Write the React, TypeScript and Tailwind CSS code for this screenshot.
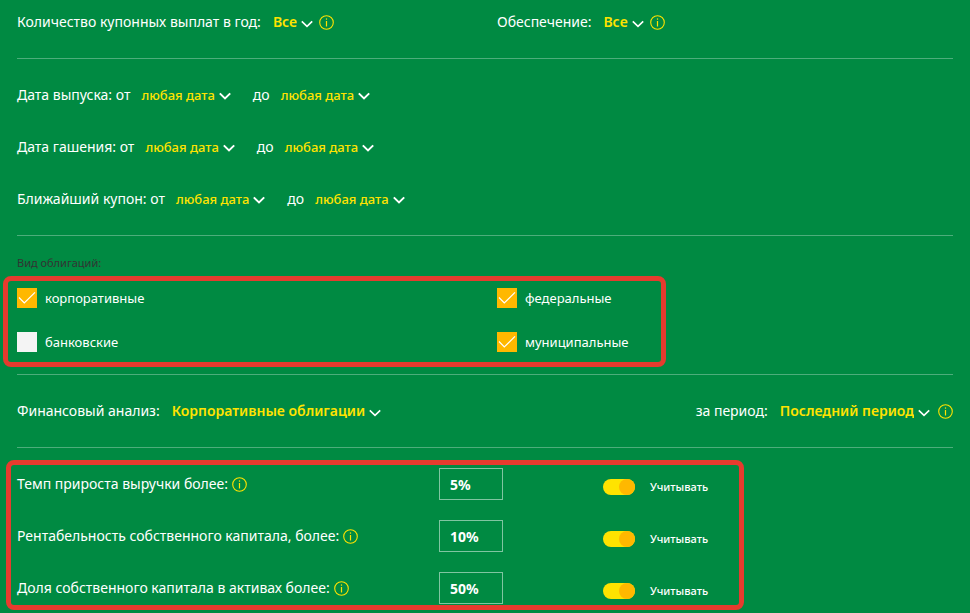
import { useState } from 'react';

const dateRows = ['Дата выпуска: от', 'Дата гашения: от', 'Ближайший купон: от'];

const bondTypes = [
  { id: 'corporate', label: 'корпоративные', checked: true },
  { id: 'federal', label: 'федеральные', checked: true },
  { id: 'bank', label: 'банковские', checked: false },
  { id: 'municipal', label: 'муниципальные', checked: true },
];

const ratios = [
  { id: 'growth', label: 'Темп прироста выручки более:', value: '5%' },
  { id: 'roe', label: 'Рентабельность собственного капитала, более:', value: '10%' },
  { id: 'equity', label: 'Доля собственного капитала в активах более:', value: '50%' },
];

function InfoButton() {
  return (
    <button type="button" aria-label="Подсказка" className="shrink-0 text-[#ffe300]">
      <svg width="15" height="15" viewBox="0 0 15 15" fill="none" stroke="currentColor">
        <circle cx="7.5" cy="7.5" r="6.8" strokeWidth="1.1" />
        <path d="M7.5 6v5.5" strokeWidth="1.2" />
        <path d="M7.5 3.4v1.3" strokeWidth="1.2" />
      </svg>
    </button>
  );
}

function Chevron({ bold = false }: { bold?: boolean }) {
  return (
    <svg
      width="12"
      height="8"
      viewBox="0 0 12 8"
      fill="none"
      stroke="white"
      strokeWidth={bold ? 2 : 1.6}
      className="pointer-events-none shrink-0"
    >
      <path d="M0.8 1.4L6 6.4L11.2 1.4" />
    </svg>
  );
}

function SelectField({ id, label, value }: { id: string; label: string; value: string }) {
  return (
    <div className="flex items-center">
      <label htmlFor={id} className="mr-3">{label}</label>
      <div className="flex items-center gap-1">
        <select
          id={id}
          className="field-sizing-content appearance-none bg-transparent text-[14px] leading-5 font-semibold text-[#ffe300] outline-none"
        >
          <option>{value}</option>
        </select>
        <span className="pt-1">
          <Chevron />
        </span>
      </div>
    </div>
  );
}

function DateButton() {
  return (
    <button type="button" className="flex items-center gap-1 text-[13px] font-medium text-[#ffe300]">
      любая дата
      <span className="pt-0.5">
        <Chevron bold />
      </span>
    </button>
  );
}

function BondCheckbox({ id, label, checked }: { id: string; label: string; checked: boolean }) {
  const [on, setOn] = useState(checked);

  return (
    <label htmlFor={id} className="flex items-center gap-2 text-[13px] leading-5">
      <span className="grid size-5">
        <input
          id={id}
          type="checkbox"
          checked={on}
          onChange={() => setOn(!on)}
          className="peer col-start-1 row-start-1 size-5 appearance-none bg-[#f4f4f4] checked:bg-[#ffb800]"
        />
        <svg
          viewBox="0 0 20 20"
          fill="none"
          stroke="white"
          strokeWidth="1.2"
          className="pointer-events-none invisible col-start-1 row-start-1 size-5 peer-checked:visible"
        >
          <path d="M2 9.5L7.3 15L18 4.3" />
        </svg>
      </span>
      {label}
    </label>
  );
}

function RatioRow({ id, label, value }: { id: string; label: string; value: string }) {
  const [text, setText] = useState(value);
  const [on, setOn] = useState(true);

  return (
    <div className="grid h-8 grid-cols-[422px_164px_1fr] items-center">
      <div className="flex items-center gap-1">
        <label htmlFor={id}>{label}</label>
        <InfoButton />
      </div>
      <input
        id={id}
        type="text"
        value={text}
        onChange={(e) => setText(e.target.value)}
        className="h-8 w-16 border border-white/50 bg-transparent px-2.5 text-[14px] font-bold outline-none"
      />
      <label className="flex items-center gap-[15px] pt-1.5 text-[11px] leading-4 font-medium">
        <input
          type="checkbox"
          role="switch"
          checked={on}
          onChange={() => setOn(!on)}
          className="flex h-4 w-8 appearance-none rounded-full bg-gray-300 before:size-4 before:rounded-full before:bg-white checked:justify-end checked:bg-[#ffe300] checked:before:bg-[#ffb800]"
        />
        Учитывать
      </label>
    </div>
  );
}

export default function App() {
  return (
    <main className="min-h-screen bg-[#008a42] px-[17px] font-['Noto_Sans','Open_Sans',sans-serif] text-[14px] leading-5 text-white">
      <section className="grid grid-cols-2 gap-6 border-b border-white/30 pt-3 pb-[26px]">
        <div className="flex items-center gap-1.5">
          <SelectField id="coupons" label="Количество купонных выплат в год:" value="Все" />
          <InfoButton />
        </div>
        <div className="flex items-center gap-1.5">
          <SelectField id="security" label="Обеспечение:" value="Все" />
          <InfoButton />
        </div>
      </section>

      <section className="border-b border-white/30 py-2.5">
        {dateRows.map((label) => (
          <div key={label} className="flex h-[52px] items-center">
            <span className="mr-[11px]">{label}</span>
            <DateButton />
            <span className="mr-[11px] ml-[22px]">до</span>
            <DateButton />
          </div>
        ))}
      </section>

      <fieldset className="relative border-b border-white/30 pb-[22px]">
        <legend className="pt-5 text-[11px] leading-3.5 text-[#333333]">Вид облигаций:</legend>
        <div className="grid grid-cols-2 gap-6 pt-[18px]">
          {bondTypes.map((type) => (
            <BondCheckbox key={type.id} {...type} />
          ))}
        </div>
        {/* Highlight frame */}
        <div className="pointer-events-none absolute top-1.5 right-[287px] bottom-[7px] -left-3.5 rounded-lg border-5 border-[#e63b2e]"></div>
      </fieldset>

      <section className="flex h-[73px] items-center justify-between border-b border-white/30">
        <SelectField id="analysis" label="Финансовый анализ:" value="Корпоративные облигации" />
        <div className="flex items-center gap-2">
          <SelectField id="period" label="за период:" value="Последний период" />
          <InfoButton />
        </div>
      </section>

      <section className="relative flex flex-col gap-5 pt-5 pb-2">
        {ratios.map((ratio) => (
          <RatioRow key={ratio.id} {...ratio} />
        ))}
        {/* Highlight frame */}
        <div className="pointer-events-none absolute top-3 bottom-0.5 -left-[11px] w-[738px] rounded-lg border-5 border-[#e63b2e]"></div>
      </section>
    </main>
  );
}
